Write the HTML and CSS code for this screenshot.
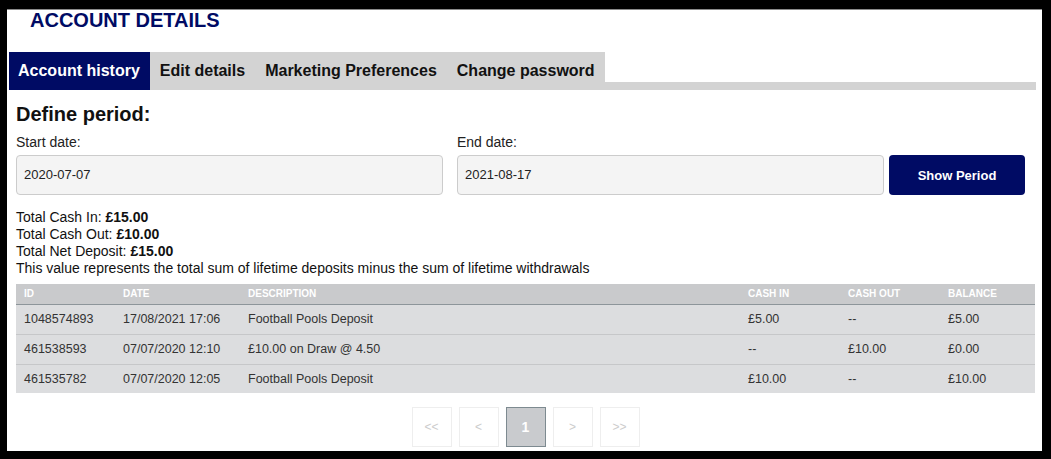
FILE: index.html
```html
<!DOCTYPE html>
<html lang="en">
<head>
<meta charset="utf-8">
<title>Account details</title>
<link rel="stylesheet" href="styles.css">
</head>
<body>
<div class="panel">
  <h1 class="title">ACCOUNT DETAILS</h1>
  <nav class="tabs">
    <a class="tab active">Account history</a>
    <a class="tab">Edit details</a>
    <a class="tab">Marketing Preferences</a>
    <a class="tab">Change password</a>
    <span class="tab-fill"></span>
  </nav>
  <section class="content">
    <h2 class="section-title">Define period:</h2>
    <div class="period">
      <label class="field field-start">
        <span class="label">Start date:</span>
        <span class="input">2020-07-07</span>
      </label>
      <label class="field">
        <span class="label">End date:</span>
        <span class="input">2021-08-17</span>
      </label>
      <button class="btn">Show Period</button>
    </div>
    <div class="summary">
      <div>Total Cash In: <b>£15.00</b></div>
      <div>Total Cash Out: <b>£10.00</b></div>
      <div>Total Net Deposit: <b>£15.00</b></div>
      <div>This value represents the total sum of lifetime deposits minus the sum of lifetime withdrawals</div>
    </div>
    <table class="history">
      <colgroup>
        <col class="c-id"><col class="c-date"><col class="c-desc"><col class="c-in"><col class="c-out"><col class="c-bal">
      </colgroup>
      <thead>
        <tr><th>ID</th><th>Date</th><th>Description</th><th>Cash in</th><th>Cash out</th><th>Balance</th></tr>
      </thead>
      <tbody>
        <tr><td>1048574893</td><td>17/08/2021 17:06</td><td>Football Pools Deposit</td><td>£5.00</td><td>--</td><td>£5.00</td></tr>
        <tr><td>461538593</td><td>07/07/2020 12:10</td><td>£10.00 on Draw @ 4.50</td><td>--</td><td>£10.00</td><td>£0.00</td></tr>
        <tr><td>461535782</td><td>07/07/2020 12:05</td><td>Football Pools Deposit</td><td>£10.00</td><td>--</td><td>£10.00</td></tr>
      </tbody>
    </table>
    <div class="pager">
      <span class="page">&lt;&lt;</span>
      <span class="page">&lt;</span>
      <span class="page current">1</span>
      <span class="page">&gt;</span>
      <span class="page">&gt;&gt;</span>
    </div>
  </section>
</div>
</body>
</html>
```
FILE: styles.css
```css
* { box-sizing: border-box; }
html, body { margin: 0; padding: 0; }
body {
  background: #000;
  font-family: "Liberation Sans", Arial, sans-serif;
  width: 1051px;
  height: 459px;
  overflow: hidden;
}
.panel {
  margin: 9px 9px 0 7px;
  height: 442px;
  background: #fff;
  border-top: 1px solid #8a8a8a;
  overflow: hidden;
}
.title {
  margin: 0;
  padding-left: 23px;
  font-size: 20px;
  line-height: 20px;
  font-weight: bold;
  color: #000b64;
}
.tabs {
  display: flex;
  margin: 22px 6px 0 2px;
  height: 38px;
}
.tab {
  display: block;
  padding: 0 10px;
  line-height: 38px;
  font-size: 16px;
  font-weight: bold;
  color: #111;
  background: #d3d3d3;
  white-space: nowrap;
}
.tab.active {
  background: #000b64;
  color: #fff;
  padding: 0 10px 0 9px;
}
.tab-fill {
  flex: 1;
  border-bottom: 8px solid #d3d3d3;
}
.content {
  padding: 0 7px 0 9px;
}
.section-title {
  margin: 13px 0 0;
  font-size: 20px;
  line-height: 23px;
  font-weight: bold;
  color: #111;
}
.period {
  display: flex;
  align-items: flex-end;
  margin-top: 8px;
}
.field {
  display: flex;
  flex-direction: column;
  width: 427px;
}
.field-start { margin-right: 14px; }
.label {
  font-size: 14px;
  line-height: 16px;
  color: #222;
  margin-bottom: 5px;
}
.input {
  display: block;
  height: 40px;
  line-height: 38px;
  padding-left: 7px;
  border: 1px solid #ccc;
  border-radius: 4px;
  background: #f4f4f4;
  font-size: 13px;
  color: #222;
}
.btn {
  margin-left: 5px;
  width: 136px;
  height: 40px;
  border: 0;
  border-radius: 4px;
  background: #000b64;
  color: #fff;
  font-family: inherit;
  font-size: 13px;
  font-weight: bold;
  padding: 0;
}
.summary {
  margin-top: 14px;
  font-size: 14px;
  line-height: 17px;
  color: #111;
}
.history {
  margin-top: 7px;
  width: 1019px;
  border-collapse: collapse;
  table-layout: fixed;
  background: #dcdddf;
}
.c-id { width: 99px; }
.c-date { width: 125px; }
.c-desc { width: 500px; }
.c-in { width: 100px; }
.c-out { width: 100px; }
.c-bal { width: 95px; }
.history th {
  height: 20px;
  padding: 0 0 0 8px;
  background: #c9cacc;
  border-bottom: 1px solid #8d959a;
  color: #fff;
  font-size: 10px;
  font-weight: bold;
  text-align: left;
  text-transform: uppercase;
}
.history td {
  height: 30px;
  padding: 0 0 0 8px;
  border-bottom: 1px solid #c6c7c9;
  font-size: 12.5px;
  color: #333;
  white-space: nowrap;
}
.history tr:last-child td { border-bottom: 0; height: 29px; }
.pager {
  display: flex;
  justify-content: center;
  gap: 7px;
  margin-top: 14px;
}
.page {
  width: 40px;
  height: 40px;
  border: 1px solid #eee;
  display: flex;
  align-items: center;
  justify-content: center;
  font-size: 12px;
  color: #ccc;
}
.page.current {
  background: #c9cbce;
  border-color: #7d8a90;
  color: #fff;
  font-weight: bold;
  font-size: 14px;
}
```
